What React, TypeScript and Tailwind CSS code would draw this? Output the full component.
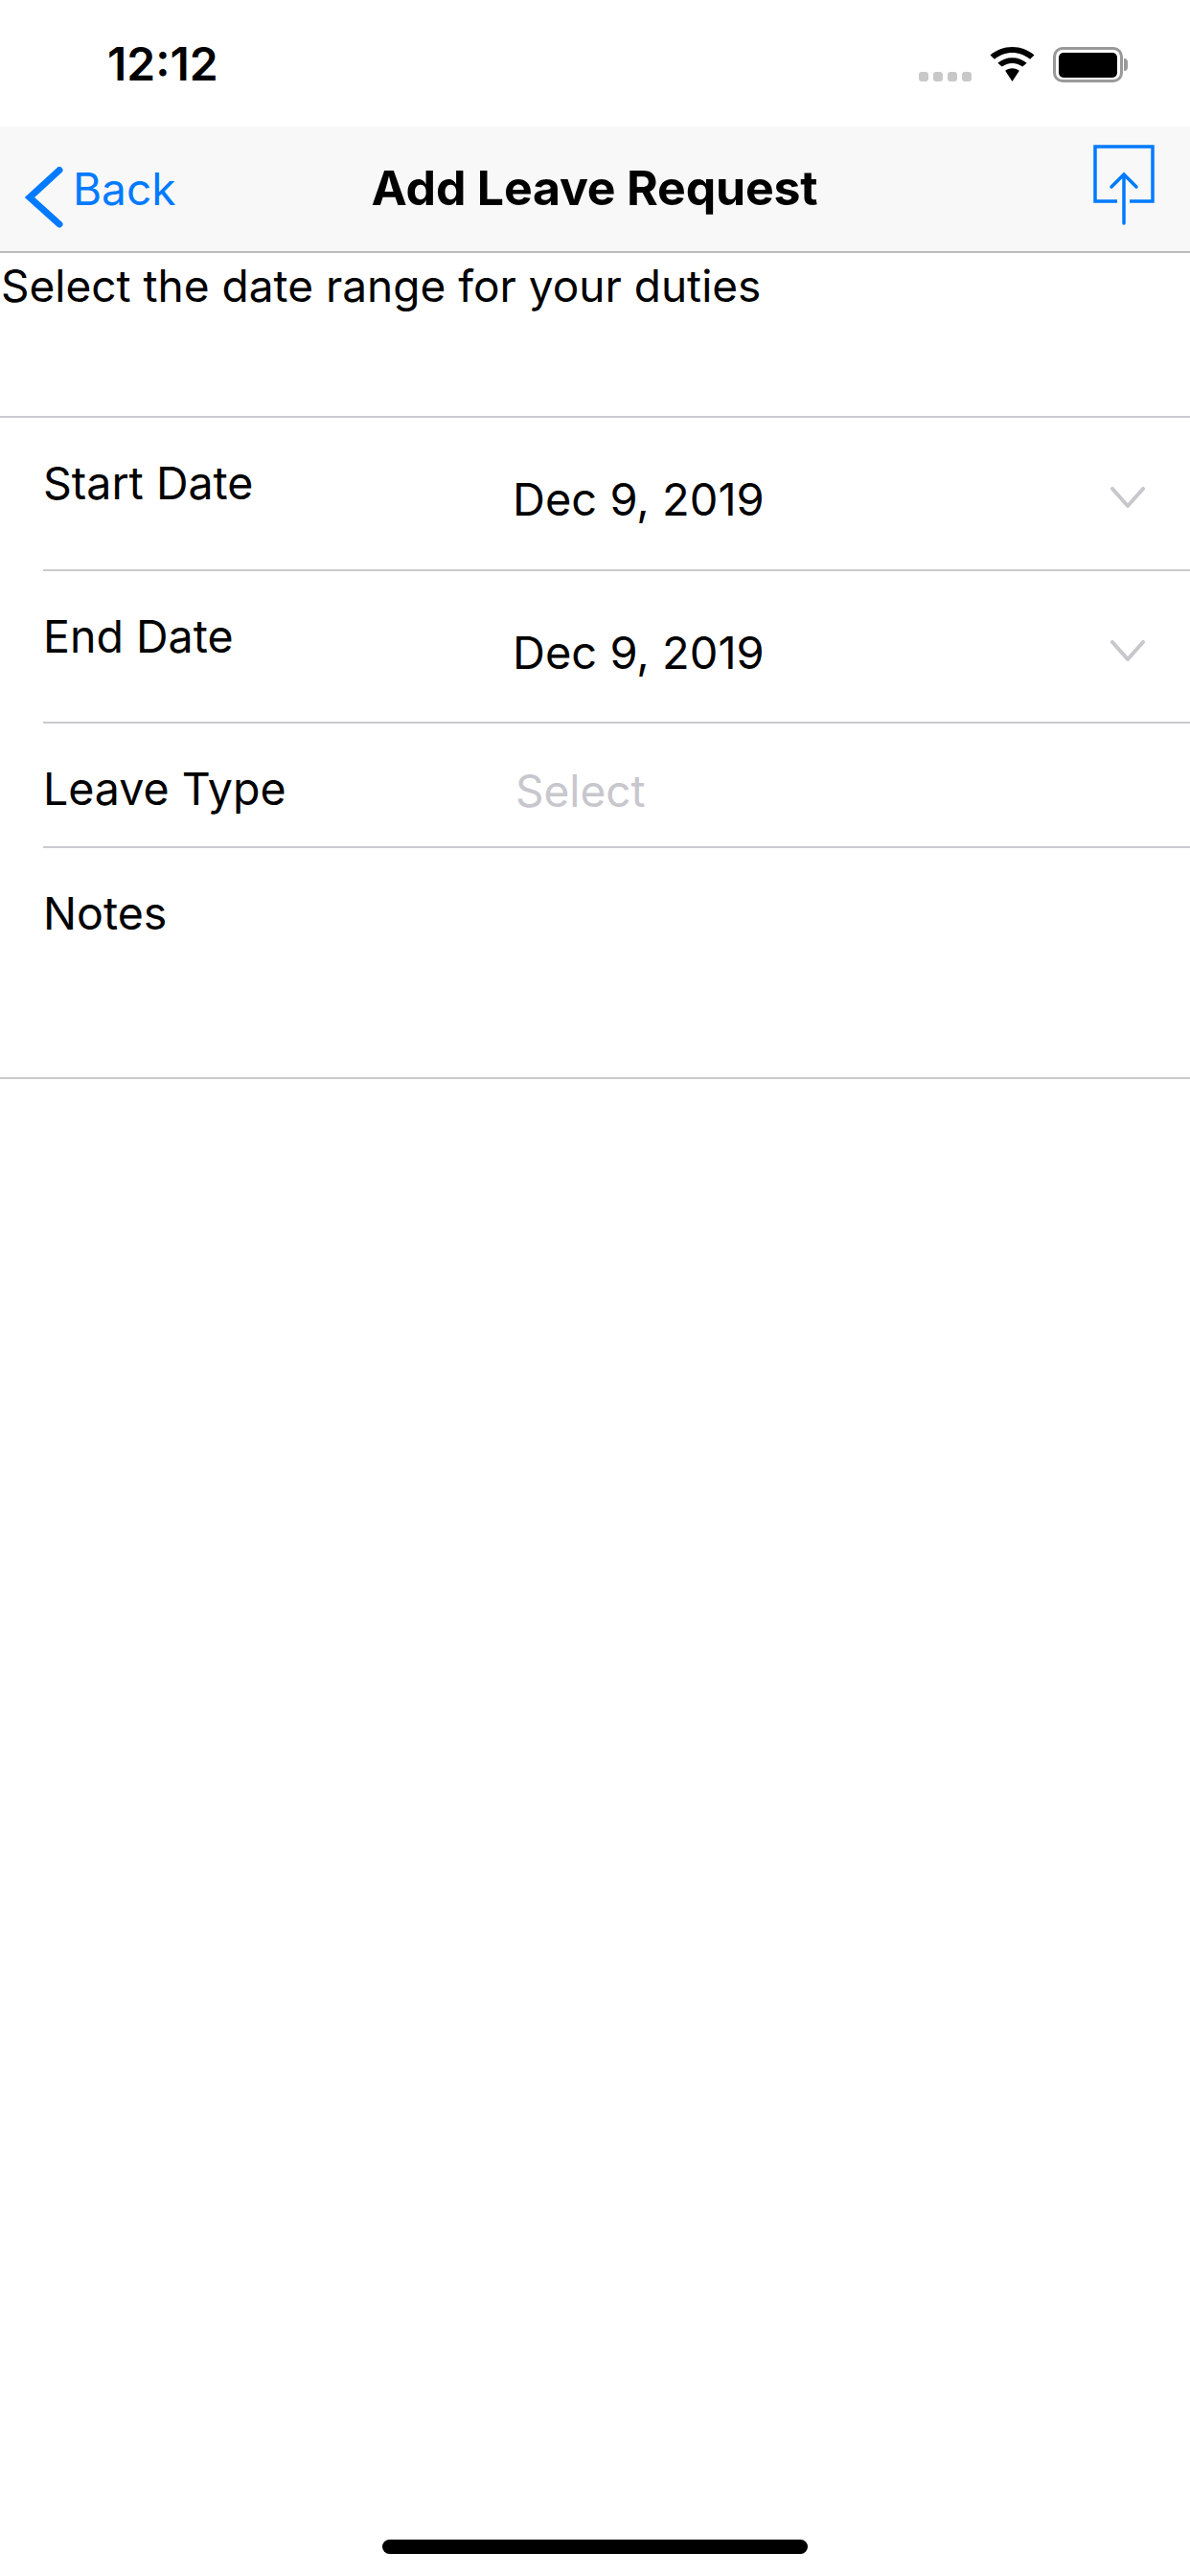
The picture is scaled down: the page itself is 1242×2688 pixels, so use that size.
const FONT = "font-['Inter','Liberation_Sans',sans-serif]";

function Chevron() {
  return (
    <svg width="36" height="24" viewBox="0 0 36 24" className="shrink-0">
      <path d="M2 2 L18 20 L34 2" fill="none" stroke="#c7c7cc" strokeWidth="4" strokeLinecap="round" strokeLinejoin="round" />
    </svg>
  );
}

function Row({ label, value, muted, chevron, h }: { label: string; value: string; muted?: boolean; chevron?: boolean; h: string }) {
  return (
    <div className={`ml-[45px] flex ${h} border-b-2 border-[#cbcacf]`}>
      <div className="w-[490px] pt-[40px] text-[46.500px] leading-[56px] text-black">{label}</div>
      {muted ? (
        <div className="pl-[3px] pt-[42px] text-[46px] leading-[56px] text-[#c7c7cd]">{value}</div>
      ) : (
        <div className="pt-[57px] text-[47px] leading-[56px] text-black">{value}</div>
      )}
      {chevron && (
        <div className="ml-auto mr-[47px] pt-[72px]">
          <Chevron />
        </div>
      )}
    </div>
  );
}

export default function App() {
  return (
    <div className={`${FONT} flex min-h-[2688px] w-[1242px] flex-col bg-white`}>
      <div className="flex h-[132px] items-center justify-between">
        <div className="pl-[112px] pt-[2px] text-[48px] font-semibold leading-none text-black">12:12</div>
        <div className="mt-[3px] flex h-[37px] items-end pr-[65px]">
          <div className="mb-[1px] flex gap-[5px]">
            <div className="h-[10px] w-[10px] rounded-[3px] bg-[#c8c8c8]" />
            <div className="h-[10px] w-[10px] rounded-[3px] bg-[#c8c8c8]" />
            <div className="h-[10px] w-[10px] rounded-[3px] bg-[#c8c8c8]" />
            <div className="h-[10px] w-[10px] rounded-[3px] bg-[#c8c8c8]" />
          </div>
          <svg width="47" height="36" viewBox="0 0 48 42" preserveAspectRatio="none" className="mb-[1px] ml-[19px]">
            <path d="M24 0 C15 0 7 3.5 0.5 10 L5 15 C10.500 10 17 7 24 7 C31 7 37.500 10 43 15 L47.500 10 C41 3.500 33 0 24 0 Z" fill="#000" />
            <path d="M24 13 C18 13 13 15.300 8.500 19.500 L13 24 C16 21.300 20 19.700 24 19.700 C28 19.700 32 21.300 35 24 L39.500 19.500 C35 15.300 30 13 24 13 Z" fill="#000" />
            <path d="M24 26 C21 26 18.500 27 16.500 29 L24 42 L31.500 29 C29.500 27 27 26 24 26 Z" fill="#000" />
          </svg>
          <div className="ml-[19px] flex h-[37px] items-center">
            <div className="flex h-[37px] w-[73px] items-center justify-center rounded-[10px] border-[3px] border-[#999999]">
              <div className="h-[26px] w-[61px] rounded-[5px] bg-black" />
            </div>
            <div className="ml-[1px] h-[13px] w-[4px] rounded-r-[4px] bg-[#999999]" />
          </div>
        </div>
      </div>

      <div className="flex h-[132px] items-center border-b-2 border-[#bcbcbc] bg-[#f8f8f8]">
        <div className="flex flex-1 items-center pl-[26px]">
          <svg width="40" height="64" viewBox="0 0 40 64" className="mt-[17px]">
            <path d="M36 3.500 L5 32 L36 60" fill="none" stroke="#007aff" strokeWidth="7" strokeLinecap="round" strokeLinejoin="miter" />
          </svg>
          <div className="ml-[10px] pb-[1px] text-[46px] leading-none text-[#007aff]">Back</div>
        </div>
        <div className="pb-[2px] pl-[10px] text-[50px] font-bold leading-none tracking-[-0.2px] text-black">Add Leave Request</div>
        <div className="flex flex-1 justify-end pr-[37px]">
          <svg width="64" height="84" viewBox="0 0 64 84" className="mb-[8px]">
            <path d="M25 59 H2 V2 H62 V59 H38" fill="none" stroke="#007aff" strokeWidth="3.500" />
            <path d="M32 82 V31 M19 44 L32 31 L45 44" fill="none" stroke="#007aff" strokeWidth="3.500" strokeLinecap="round" />
          </svg>
        </div>
      </div>

      <div className="h-[172px] border-b-2 border-[#cbcacf] pl-[1px] pt-[6px] text-[46px] leading-[56px] text-black">
        Select the date range for your duties
      </div>

      <Row label="Start Date" value="Dec 9, 2019" chevron h="h-[160px]" />
      <Row label="End Date" value="Dec 9, 2019" chevron h="h-[159px]" />
      <Row label="Leave Type" value="Select" muted h="h-[130px]" />
      <div className="h-[241px] border-b-2 border-[#cbcacf] pl-[45px] pt-[40px] text-[46.500px] leading-[56px] text-black">Notes</div>

      <div className="mt-auto flex justify-center pb-[23px]">
        <div className="h-[15px] w-[444px] rounded-full bg-black" />
      </div>
    </div>
  );
}
